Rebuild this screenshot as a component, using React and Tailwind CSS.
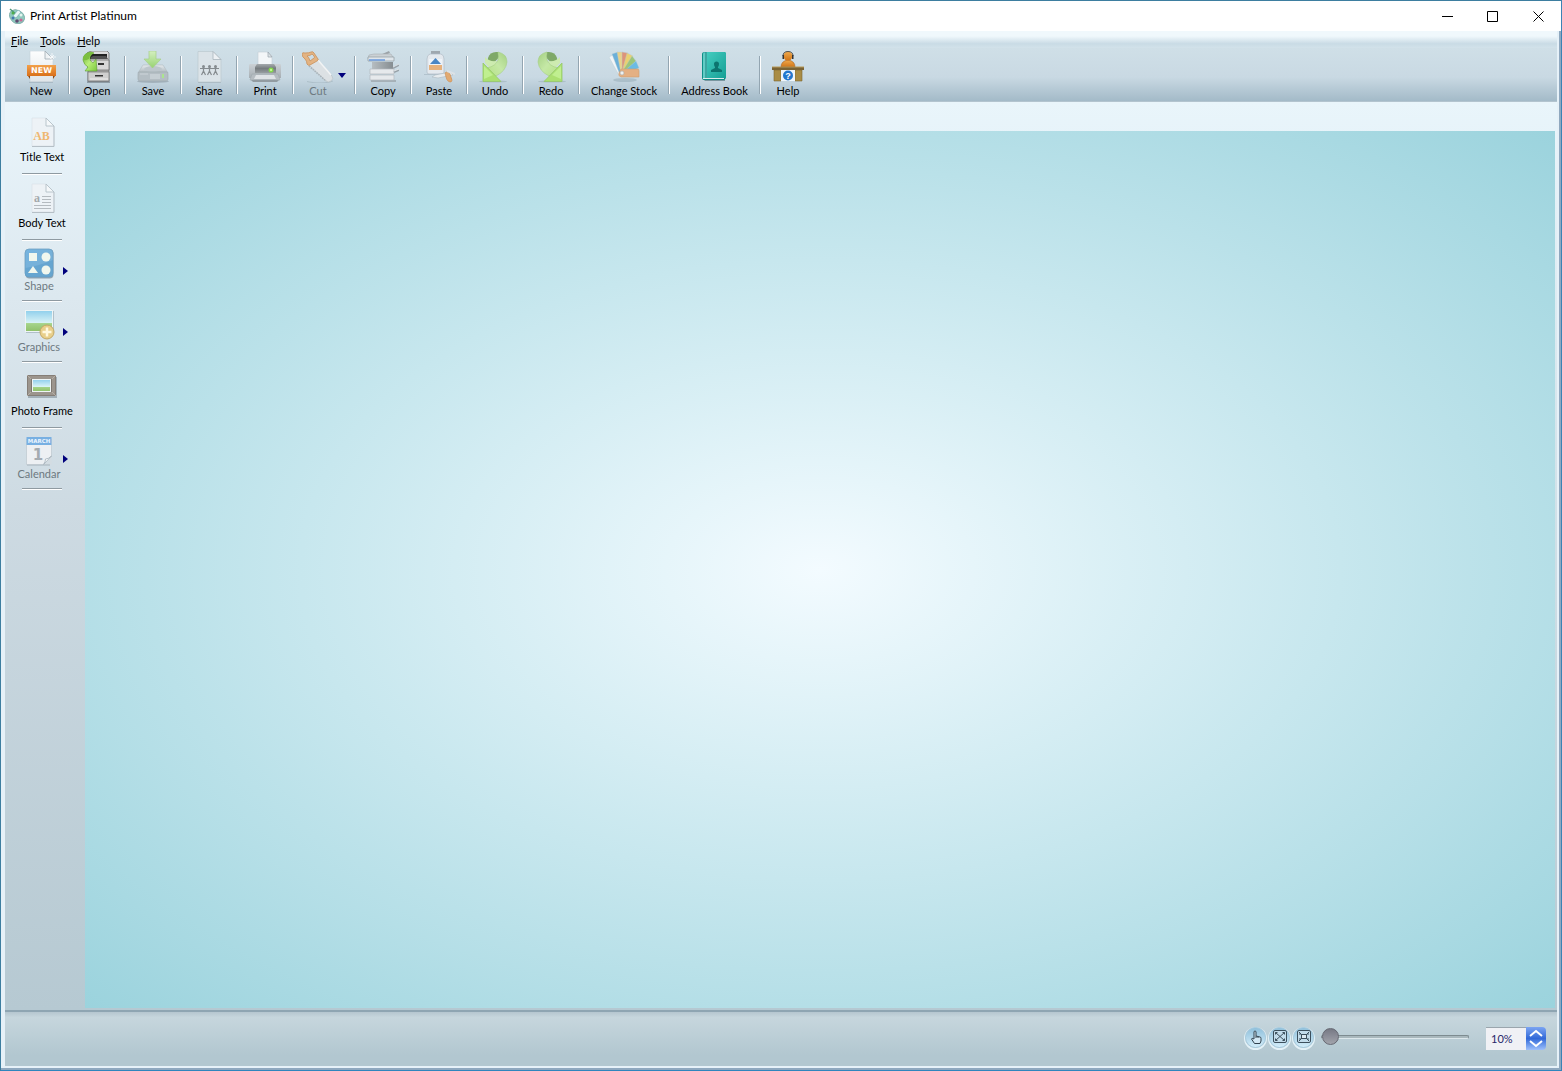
import React from 'react';

const NewIcon = () => (
  <svg width="32" height="32" viewBox="0 0 32 32">
    <defs>
      <linearGradient id="newPage" x1="0" y1="0" x2="0" y2="1">
        <stop offset="0" stopColor="#fdfefe" />
        <stop offset="1" stopColor="#dfe4e8" />
      </linearGradient>
      <linearGradient id="newBand" x1="0" y1="0" x2="0" y2="1">
        <stop offset="0" stopColor="#f2a04a" />
        <stop offset="1" stopColor="#d9701a" />
      </linearGradient>
    </defs>
    <path d="M5 0h15l8 8v23H5z" fill="url(#newPage)" stroke="#c5d0d8" strokeWidth="0.6" />
    <path d="M20 0l8 8h-8z" fill="#eef2f4" stroke="#9fabb3" strokeWidth="0.8" />
    <path d="M4 30.8h24v1H4z" fill="#8fa2ae" opacity="0.6" />
    <path d="M3 25l2 3v-3zM30 25l-2 3v-3z" fill="#8f4a12" />
    <path d="M2 14h29v11H2z" fill="url(#newBand)" />
    <path d="M27 2v8M23 6h8M25 4l4 4M29 4l-4 4" stroke="#fff" strokeWidth="0.7" />
    <text x="16.5" y="22" textAnchor="middle" fontSize="8" fontWeight="700" fill="#fff" fontFamily="DejaVu Sans, sans-serif" textRendering="geometricPrecision">NEW</text>
  </svg>
);

const OpenIcon = () => (
  <svg width="32" height="32" viewBox="0 0 32 32">
    <defs>
      <linearGradient id="cabinet" x1="0" y1="0" x2="0" y2="1">
        <stop offset="0" stopColor="#e2e2e2" />
        <stop offset="1" stopColor="#8e8e8e" />
      </linearGradient>
      <linearGradient id="openArrow" x1="0" y1="0" x2="1" y2="1">
        <stop offset="0" stopColor="#6cae33" />
        <stop offset="0.5" stopColor="#b9ee79" />
        <stop offset="1" stopColor="#7bc83d" />
      </linearGradient>
    </defs>
    <path d="M6 30h23v2H6z" fill="#6d7880" opacity="0.6" />
    <path d="M6 2l4-2h16l2 2v28H7V5z" fill="url(#cabinet)" stroke="#6d6d6d" strokeWidth="0.8" />
    <path d="M9 3h17v5H9z" fill="#222" />
    <path d="M10 6l2-1h13l2 3H10z" fill="#515151" />
    <path d="M9 9h19v10H9z" fill="#d8d8d8" stroke="#666" strokeWidth="0.7" />
    <path d="M7 21h21v9H7z" fill="#cfcfcf" stroke="#777" strokeWidth="0.7" />
    <path d="M17 12h6v2h-6zM14 24h8v1.500h-8z" fill="#333" />
    <path d="M9 28h18" stroke="#efefef" />
    <path d="M10 1Q2 2 2 9q1 5 5 7l-3 4h12L15 8l-3 4Q8 10 9 6q1-3 4-4z" fill="url(#openArrow)" stroke="#5b9d2c" strokeWidth="0.6" />
    <path d="M10 1Q2 2 2 9q2 1 6-1 0-4 5-6z" fill="#7cbf3f" />
  </svg>
);

const SaveIcon = () => (
  <svg width="32" height="32" viewBox="0 0 32 32" opacity="0.8">
    <defs>
      <linearGradient id="drive" x1="0" y1="0" x2="0" y2="1">
        <stop offset="0" stopColor="#eceff1" />
        <stop offset="1" stopColor="#a4acb1" />
      </linearGradient>
      <linearGradient id="saveArrow" x1="0" y1="0" x2="0" y2="1">
        <stop offset="0" stopColor="#d6f4b8" />
        <stop offset="1" stopColor="#8cd255" />
      </linearGradient>
    </defs>
    <ellipse cx="16" cy="30.5" rx="16" ry="1.5" fill="#84919a" opacity="0.6" />
    <path d="M6 14h20l5 8H1z" fill="url(#drive)" stroke="#aab2b7" strokeWidth="0.6" />
    <ellipse cx="16" cy="18" rx="9" ry="3" fill="#bac2c7" />
    <path d="M2 21h28q1 0 1 2v5q0 2-2 2H3q-2 0-2-2v-5q0-2 1-2z" fill="#b0b8bd" stroke="#949da3" strokeWidth="0.6" />
    <path d="M14 23v5M16 23v5M18 23v5M20 23v5M22 23v5" stroke="#dce1e4" />
    <path d="M26 23v4" stroke="#a4e878" strokeWidth="2" />
    <path d="M3 23h8" stroke="#cdd3d7" />
    <path d="M12 0h7v8h5l-8.500 9L7 8h5z" fill="url(#saveArrow)" stroke="#9dcc74" strokeWidth="0.7" />
  </svg>
);

const ShareIcon = () => (
  <svg width="32" height="32" viewBox="0 0 32 32">
    <path d="M5 31h23v1H5z" fill="#93a3ad" opacity="0.6" />
    <path d="M5 .5h15l8 8V31H5z" fill="#dbe3e8" stroke="#bcc8cf" strokeWidth="0.7" />
    <path d="M20 .5v8h8z" fill="#edf1f4" stroke="#a9b5bd" strokeWidth="0.8" />
    <g stroke="#858b8f" strokeWidth="1.2" fill="none">
      <path d="M7 17.500h19M10.500 16v4l-2 4M10.500 20l2 4M16.500 16v4l-2 4M16.500 20l2 4M22.500 16v4l-2 4M22.500 20l2 4" />
    </g>
    <g fill="#858b8f">
      <circle cx="10.500" cy="15.500" r="1.500" />
      <circle cx="16.500" cy="15.500" r="1.500" />
      <circle cx="22.500" cy="15.500" r="1.500" />
    </g>
  </svg>
);

const PrintIcon = () => (
  <svg width="32" height="32" viewBox="0 0 32 32">
    <defs>
      <linearGradient id="printer" x1="0" y1="0" x2="0" y2="1">
        <stop offset="0" stopColor="#cbd1d5" />
        <stop offset="1" stopColor="#a6aeb3" />
      </linearGradient>
      <linearGradient id="printerTop" x1="0" y1="0" x2="0" y2="1">
        <stop offset="0" stopColor="#a5aaad" />
        <stop offset="0.5" stopColor="#767c7f" />
        <stop offset="1" stopColor="#979da0" />
      </linearGradient>
    </defs>
    <path d="M9 1h10l4 4v9H9z" fill="#f3f6f8" stroke="#c4cdd3" strokeWidth="0.6" />
    <path d="M19 1v5h4z" fill="#dde3e6" stroke="#98a4ac" strokeWidth="0.7" />
    <path d="M1 13h30q1 0 1 2v12H0V15q0-2 1-2z" fill="url(#printer)" />
    <path d="M8 13h17l2 3v6H6v-6z" fill="url(#printerTop)" />
    <circle cx="22" cy="19" r="2.500" fill="#84d84d" />
    <circle cx="22" cy="19" r="1" fill="#d7ffa8" />
    <path d="M3 23h26l2 6H1z" fill="#b6bdc2" stroke="#9ea7ad" strokeWidth="0.6" />
    <path d="M7 24h18l2 4H5z" fill="#dfe3e6" />
    <path d="M2 29h28l-2 2H4z" fill="#929ba1" />
  </svg>
);

const CutIcon = () => (
  <svg width="32" height="32" viewBox="0 0 32 32">
    <path d="M5 30.500c8 2 20 2 26-.5" stroke="#9aabb5" opacity="0.5" fill="none" />
    <path d="M15 8L7 14l17 16q2 2 5 0 3-2 1-5z" fill="#dce1e4" stroke="#b9c1c6" strokeWidth="0.7" />
    <path d="M7 15l17 15" stroke="#aab3b9" strokeWidth="1.500" strokeDasharray="1.500 1" />
    <path d="M16 9l13 15" stroke="#f2f4f5" strokeWidth="1.500" />
    <path fillRule="evenodd" d="M0 3q0-2 3-1 4 0 6-1 2-1 3 1l4 6q1 1-1 2l-7 4q-2 1-3-1 0-3-2-5Q0 6 0 3zM5 5q2 1 3 5l4-3q1 0 0-2l-2-2q-2 2-5 2z" fill="#e3b382" stroke="#c9905a" strokeWidth="0.8" />
  </svg>
);

const CopyIcon = () => (
  <svg width="32" height="32" viewBox="0 0 32 32">
    <defs>
      <linearGradient id="copier" x1="0" y1="0" x2="1" y2="0">
        <stop offset="0" stopColor="#b6bdc1" />
        <stop offset="1" stopColor="#868d91" />
      </linearGradient>
    </defs>
    <path d="M4 29h25v2H4z" fill="#a5b0b7" />
    <path d="M13 4l9-4 1 2-8 3z" fill="#9ca3a8" />
    <path d="M2 4l5-1h17l3 5H1z" fill="#cbd1d5" stroke="#a7afb4" strokeWidth="0.6" />
    <path d="M1 6h26v4H1z" fill="#dfe5ea" stroke="#919ba2" strokeWidth="0.7" />
    <path d="M2 9h16" stroke="#6898dd" strokeWidth="1.500" />
    <path d="M5 11h21v7H5z" fill="url(#copier)" />
    <path d="M3 18h24v5H3zM3 24h24v5H3z" fill="#e6e9ec" stroke="#b1b9be" strokeWidth="0.7" />
    <path d="M26 17l6-3M27 21l5-2" stroke="#98a2a9" strokeWidth="2" />
    <path d="M26 16l6-3M27 20l5-2" stroke="#dfe4e7" />
  </svg>
);

const PasteIcon = () => (
  <svg width="32" height="32" viewBox="0 0 32 32">
    <path d="M1 23h22v1H1z" fill="#9aacb8" opacity="0.5" />
    <path d="M8 0h9v3H8z" fill="#9fa8af" />
    <path d="M7 3h11q3 1 3 5v13q0 2-2 2H6q-2 0-2-2V8q0-4 3-5z" fill="#e4e9ee" stroke="#b0bcc6" strokeWidth="0.7" />
    <path d="M6 8h13v6H6z" fill="#eef3f8" />
    <path d="M12.500 7L18 13H7z" fill="#4a86c5" />
    <path d="M6 14h13v5H6z" fill="#e6b17c" />
    <path d="M12 24l15-3 3 3-15 3-6-1z" fill="#e6ebee" stroke="#aab7bf" strokeWidth="0.6" />
    <path d="M22 22q4-4 6 4 2 4 0 5-4 0-5-5z" fill="#e1aa72" stroke="#cb8c50" strokeWidth="0.6" />
    <path d="M24 20l8 3" stroke="#dce2e6" strokeWidth="2" />
  </svg>
);

const CurlArrow = ({ id }) => (
  <>
    <defs>
      <linearGradient id={id} x1="1" y1="0" x2="0" y2="1">
        <stop offset="0" stopColor="#a3cf82" />
        <stop offset="0.5" stopColor="#c5e8a6" />
        <stop offset="1" stopColor="#b5e286" />
      </linearGradient>
    </defs>
    <ellipse cx="14" cy="30.500" rx="14" ry="1" fill="#95aab3" opacity="0.5" />
    <path d="M9 7Q11 0 19 1l1 5q-3 5-8 6-4-1-3-5z" fill="#7fa968" />
    <path d="M6 6q4 5 12 4-1 5-6 8L6 12z" fill="#cdebb0" />
    <path d="M19 1q9 2 9 10-1 9-11 14l-9-8q9-2 11-8 1-4 0-8z" fill={`url(#${id})`} stroke="#a5cf83" strokeWidth="0.6" />
    <path d="M4 12l18 18.500H4z" fill="#abe071" stroke="#96c969" strokeWidth="0.8" />
    <path d="M5 15l9 9-9 4z" fill="#c0ef90" />
  </>
);

const UndoIcon = () => (
  <svg width="32" height="32" viewBox="0 0 32 32">
    <CurlArrow id="undoCurl" />
  </svg>
);

const RedoIcon = () => (
  <svg width="32" height="32" viewBox="0 0 32 32">
    <g transform="translate(31 0) scale(-1 1)">
      <CurlArrow id="redoCurl" />
    </g>
  </svg>
);

const StockIcon = () => (
  <svg width="32" height="32" viewBox="0 0 32 32">
    <ellipse cx="17" cy="29" rx="12" ry="2" fill="#8fa3af" opacity="0.45" />
    <g stroke="#b6cbd5" strokeWidth="0.4">
      <path d="M1 6l4-2 9 19-2 3z" fill="#f2f5f7" />
      <path d="M4 3l6-2 5 21-3 2z" fill="#6cb0d8" />
      <path d="M9 1h6l1 21-3 1z" fill="#e8d28a" />
      <path d="M14 1l6 1-4 20-2-1z" fill="#dd9479" />
      <path d="M19 2l6 3-9 17-2-1z" fill="#e9d171" />
      <path d="M24 5l4 5-12 13-2-2z" fill="#9cc57a" />
      <path d="M28 10l3 7-15 6-2-1z" fill="#6bbbe4" />
    </g>
    <path d="M13 18h17q1 0 1 2v6H13q-3-1-2-4z" fill="#e4b083" stroke="#cf9d70" strokeWidth="0.6" />
    <circle cx="14" cy="22" r="2" fill="#edf1f2" stroke="#aaa" strokeWidth="0.6" />
  </svg>
);

const AddressIcon = () => (
  <svg width="32" height="32" viewBox="0 0 32 32">
    <defs>
      <linearGradient id="book" x1="0" y1="0" x2="1" y2="1">
        <stop offset="0" stopColor="#45cdc0" />
        <stop offset="1" stopColor="#159f95" />
      </linearGradient>
    </defs>
    <path d="M5 28h22v2H7z" fill="#79969f" />
    <path d="M7 1h19q2 0 2 2v23q0 2-2 3H6q-2 0-2-2V3q0-2 3-2z" fill="#0d8f87" />
    <path d="M8 1h18q2 0 2 2v23q0 1-2 1H8z" fill="url(#book)" />
    <path d="M5 3q0-2 4-2v26H5z" fill="#62ccc5" />
    <path d="M8 1v26" stroke="#16807f" />
    <path d="M5 27.500h21" stroke="#d9eceb" />
    <path d="M16 13q0-2.500 2.500-2.500T21 13q0 2-1 3v1l4 2v2H13v-2l4-2v-1q-1-1-1-3z" fill="#0c746f" />
  </svg>
);

const HelpIcon = () => (
  <svg width="32" height="32" viewBox="0 0 32 32">
    <defs>
      <linearGradient id="helper" x1="0" y1="0" x2="0" y2="1">
        <stop offset="0" stopColor="#f0aa4c" />
        <stop offset="1" stopColor="#cf7418" />
      </linearGradient>
    </defs>
    <path d="M9 16q0-6 7-7 7 1 7 7z" fill="url(#helper)" stroke="#a65c14" strokeWidth="0.6" />
    <circle cx="16" cy="5" r="4.500" fill="url(#helper)" />
    <path d="M11 5q0-4.500 5-4.500T21 5" stroke="#444" strokeWidth="0.9" fill="none" />
    <path d="M10.500 4H12v4h-1.500zM20 4h1.500v4H20z" fill="#333" />
    <path d="M2 19h7v11H2zM23 19h7v11h-7z" fill="#a98c45" stroke="#7d6630" strokeWidth="0.6" />
    <path d="M0 16h32v3H0z" fill="#7a6334" />
    <path d="M0 16h32" stroke="#b89a59" />
    <path d="M9 19h14v11H9z" fill="#f0f6fb" />
    <circle cx="16" cy="24.500" r="5" fill="#2377cd" />
    <text x="16" y="28" textAnchor="middle" fontSize="9" fontWeight="700" fill="#fff" fontFamily="Liberation Sans, sans-serif">?</text>
  </svg>
);

const FadedPage = ({ children }) => (
  <svg width="32" height="32" viewBox="0 0 32 32">
    <path d="M6 1h14l8 8v20H6z" fill="#edf2f6" stroke="#dbe3e8" strokeWidth="0.7" />
    <path d="M28 9v20.500H6" fill="none" stroke="#b5bfc6" />
    <path d="M20 1v8h8z" fill="#f5f8fa" stroke="#b3bfc7" strokeWidth="0.9" />
    {children}
  </svg>
);

const TitleTextIcon = () => (
  <FadedPage>
    <text x="15.500" y="23" textAnchor="middle" fontSize="12" fontWeight="700" fill="#efb771" fontFamily="Liberation Serif, serif">AB</text>
  </FadedPage>
);

const BodyTextIcon = () => (
  <FadedPage>
    <text x="11" y="19" textAnchor="middle" fontSize="12" fontWeight="700" fill="#a3a8ac" fontFamily="Liberation Serif, serif">a</text>
    <path d="M16 13.500h9M16 16.500h9M16 19.500h9M8 22.500h17M8 25.500h17" stroke="#b4babf" />
  </FadedPage>
);

const ShapeIcon = () => (
  <svg width="32" height="32" viewBox="0 0 32 32">
    <defs>
      <linearGradient id="shapeTile" x1="0" y1="0" x2="1" y2="1">
        <stop offset="0" stopColor="#75b4e0" />
        <stop offset="1" stopColor="#78aed2" />
      </linearGradient>
    </defs>
    <rect x="2.500" y="1.500" width="28" height="29" rx="4" fill="#8fa3b2" />
    <rect x="2" y="1" width="28" height="28" rx="4" fill="url(#shapeTile)" stroke="#6d9fc2" strokeWidth="0.8" />
    <path d="M2.500 20Q15 18 30 12v13q0 4-4 4H6q-4 0-4-4z" fill="#5c9fcc" opacity="0.6" />
    <path d="M6 5h8v8H6z" fill="#f1f7ee" />
    <circle cx="23" cy="9" r="4.500" fill="#f1f7ee" />
    <path d="M10 18l5 7H5z" fill="#f1f7ee" />
    <circle cx="23" cy="22" r="4.500" fill="#f1f7ee" />
  </svg>
);

const Landscape = ({ id, x, y, w, h }) => (
  <>
    <defs>
      <linearGradient id={id} x1="0" y1="0" x2="0" y2="1">
        <stop offset="0" stopColor="#8fcfec" />
        <stop offset="0.600" stopColor="#daf3f6" />
        <stop offset="0.620" stopColor="#a5d48a" />
        <stop offset="1" stopColor="#8fc069" />
      </linearGradient>
    </defs>
    <rect x={x} y={y} width={w} height={h} fill={`url(#${id})`} stroke="#edf4f5" />
  </>
);

const GraphicsIcon = () => (
  <svg width="32" height="32" viewBox="0 0 32 32">
    <rect x="3" y="2" width="28" height="22" fill="#9fafb9" opacity="0.7" />
    <Landscape id="graphicsView" x={2.5} y={1.5} w={27} h={21} />
    <circle cx="24" cy="23" r="7" fill="#e8cf8a" stroke="#c3a867" />
    <path d="M24 18.500v9M19.500 23h9" stroke="#fff8de" strokeWidth="2.500" />
  </svg>
);

const FrameIcon = () => (
  <svg width="32" height="32" viewBox="0 0 32 32">
    <path d="M2 6h29v21H2z" fill="#a3b0b8" />
    <path d="M1.500 4.500h28v20h-28z" fill="#9c958d" stroke="#857e77" />
    <path d="M1 4l5 5M30 4l-5 5M1 25l5-5M30 25l-5-5" stroke="#b5aea6" />
    <path d="M5 8h21v13H5z" fill="#7d7770" />
    <Landscape id="frameView" x={6.5} y={8.5} w={18} h={12} />
  </svg>
);

const CalendarIcon = () => (
  <svg width="32" height="32" viewBox="0 0 32 32">
    <path d="M4 28h23v1.500H4z" fill="#a6b2ba" />
    <path d="M3.500 3h25v18l-8 7.500h-17z" fill="#edf0f3" stroke="#bdc7ce" strokeWidth="0.7" />
    <path d="M3.500 1h25v8h-25z" fill="#78b0e2" />
    <path d="M28.500 20q-3 3-6 3 0 3-2 5.500h8z" fill="#d3dce2" />
    <path d="M28.500 20q-3 3-6 3 0 3-2 5.500z" fill="#fbfcfd" stroke="#a5b1ba" strokeWidth="0.8" />
    <text x="16" y="7" textAnchor="middle" fontSize="5.500" fontWeight="700" fill="#eaf5ff" fontFamily="DejaVu Sans, sans-serif" textRendering="geometricPrecision">MARCH</text>
    <text x="15" y="24" textAnchor="middle" fontSize="15" fontWeight="700" fill="#a4abb1" fontFamily="DejaVu Sans, sans-serif">1</text>
  </svg>
);

const AppLogo = () => (
  <svg width="16" height="16" viewBox="0 0 16 16">
    <path d="M2 3q4-3 9 0 4 2 5 7-1 5-6 6-6 0-9-6-2-4 1-7z" fill="#8fc9be" stroke="#6f9b9a" strokeWidth="0.6" />
    <path d="M1 1l7 6" stroke="#50987c" strokeWidth="1.500" />
    <path d="M4 8l5-6 3 2-5 6z" fill="#eaf7f8" stroke="#5fa1a5" strokeWidth="0.5" />
    <circle cx="4" cy="5" r="1.500" fill="#4fae4c" />
    <circle cx="4" cy="10" r="1.500" fill="#4478b0" />
    <circle cx="8" cy="13" r="1.800" fill="#5f4b70" />
    <circle cx="12" cy="12" r="1.600" fill="#c86795" />
    <circle cx="12" cy="7" r="1.500" fill="#e3f4ee" />
  </svg>
);

const HandIcon = () => (
  <svg width="14" height="14" viewBox="0 0 14 14" fill="#d3e8f4" stroke="#32434f" strokeWidth="1">
    <path d="M5 8V2q0-1 1-1t1 1v4l4 1q1 0 1 1.500V11l-1 2.500H5.500L2.500 9q0-1.500 2.500 0zM9 6.500V8M7 6v2" />
  </svg>
);

const FitPageIcon = () => (
  <svg width="16" height="16" viewBox="0 0 16 16" fill="none" stroke="#3d505d">
    <rect x="1.500" y="1.500" width="13" height="12" rx="1.500" fill="#c2dceb" />
    <path d="M3.500 3.500l9 8M12.500 3.500l-9 8" />
    <path d="M3.500 5.500v-2h2M10.500 3.500h2v2M3.500 9.500v2h2M10.500 11.500h2v-2" />
  </svg>
);

const FitObjectIcon = () => (
  <svg width="16" height="16" viewBox="0 0 16 16" fill="none" stroke="#3d505d">
    <rect x="1.500" y="1.500" width="13" height="12" rx="1.500" fill="#c2dceb" />
    <rect x="5.500" y="5.500" width="5" height="4" fill="#dceaf2" />
    <path d="M3 3l2.500 2.500M13 3l-2.500 2.500M3 12l2.500-2.500M13 12l-2.500-2.500M4 4v2M12 4v2M4 9v2M12 9v2" />
  </svg>
);

const tools = [
  { label: 'New', icon: NewIcon, width: 'w-[54px]' },
  { label: 'Open', icon: OpenIcon, width: 'w-[54px]' },
  { label: 'Save', icon: SaveIcon, width: 'w-[54px]' },
  { label: 'Share', icon: ShareIcon, width: 'w-[54px]' },
  { label: 'Print', icon: PrintIcon, width: 'w-[54px]' },
  { label: 'Cut', icon: CutIcon, width: 'w-[60px]', menu: true },
  { label: 'Copy', icon: CopyIcon, width: 'w-[54px]' },
  { label: 'Paste', icon: PasteIcon, width: 'w-[54px]' },
  { label: 'Undo', icon: UndoIcon, width: 'w-[54px]' },
  { label: 'Redo', icon: RedoIcon, width: 'w-[54px]' },
  { label: 'Change Stock', icon: StockIcon, width: 'w-[88px]' },
  { label: 'Address Book', icon: AddressIcon, width: 'w-[89px]' },
  { label: 'Help', icon: HelpIcon, width: 'w-[54px]' }
];

const inserts = [
  { label: 'Title Text', icon: TitleTextIcon },
  { label: 'Body Text', icon: BodyTextIcon },
  { label: 'Shape', icon: ShapeIcon, menu: true },
  { label: 'Graphics', icon: GraphicsIcon, menu: true },
  { label: 'Photo Frame', icon: FrameIcon },
  { label: 'Calendar', icon: CalendarIcon, menu: true }
];

const TitleBar = () => (
  <header className="flex h-[30px] items-center bg-white pl-2">
    <AppLogo />
    <h1 className="ml-[5px] flex-1 text-[12px] leading-4">Print Artist Platinum</h1>
    <button aria-label="Minimize" className="flex h-full w-[46px] items-center justify-center">
      <svg width="11" height="11" stroke="#000"><path d="M0 5.500h11" /></svg>
    </button>
    <button aria-label="Maximize" className="flex h-full w-[45px] items-center justify-center">
      <svg width="11" height="11" stroke="#000" fill="none"><path d="M.5.500h10v10H.5z" /></svg>
    </button>
    <button aria-label="Close" className="flex h-full w-[46px] items-center justify-center">
      <svg width="11" height="11" stroke="#000"><path d="M.5.500l10 10M10.500.500l-10 10" /></svg>
    </button>
  </header>
);

const MenuBar = () => (
  <nav className="flex h-[17px] items-end gap-3 bg-linear-to-b from-[#f0f8fc] from-30% via-[#c9dbe5] via-75% to-[#d2e2ea] pl-1.5 text-[11px] leading-[14px]">
    {['File', 'Tools', 'Help'].map((item) => (
      <button key={item}>
        <span className="underline">{item[0]}</span>{item.slice(1)}
      </button>
    ))}
  </nav>
);

const Toolbar = () => (
  <div className="flex h-[54px] items-start border-b border-[#b3c4cf] bg-linear-to-b from-[#cfdfe7] via-[#c9d9e3] via-55% to-[#a3bac8] pl-[9px] text-[11px] leading-4">
    {tools.map(({ label, icon: Icon, width, menu }, idx) => (
      <React.Fragment key={label}>
        {idx > 0 && <span className="mt-2 h-[38px] w-0.5 border-r border-l border-r-white border-l-[#93a5b1]" />}
        <button className={`flex items-center justify-center pt-[3px] ${width}`}>
          <span className={`flex flex-col items-center whitespace-nowrap ${menu ? 'text-[#6d7980]' : 'text-black'}`}>
            <Icon />
            {label}
          </span>
          {menu && <svg width="8" height="5" className="ml-1 shrink-0"><path d="M0 0h8L4 5z" fill="#00007c" /></svg>}
        </button>
      </React.Fragment>
    ))}
  </div>
);

const Sidebar = () => (
  <aside className="w-20 shrink-0 bg-linear-to-b from-[#eaf5fb] via-[#cddae2] via-45% to-[#b6c9d2] pt-[7px] text-[11px] leading-4">
    {inserts.map(({ label, icon: Icon, menu }) => (
      <div key={label} className="flex w-[74px] flex-col items-center">
        <button className={`flex items-center ${menu ? 'h-[59px] w-full pl-2.5' : 'h-16 justify-center'}`}>
          <span className={`flex flex-col items-center whitespace-nowrap ${menu ? 'w-12 text-[#6d7980]' : 'text-black'}`}>
            <Icon />
            <span className={menu ? '-mt-0.5' : ''}>{label}</span>
          </span>
          {menu && <svg width="5" height="8" className="shrink-0"><path d="M0 0v8l5-4z" fill="#00007c" /></svg>}
        </button>
        <span className="h-0.5 w-10 border-t border-b border-t-[#8f9aa1] border-b-white" />
      </div>
    ))}
  </aside>
);

const RoundButton = ({ label, children }) => (
  <button aria-label={label} className="flex size-[21px] items-center justify-center rounded-full border border-[#a7cbdf] bg-linear-to-b from-[#8fc0dc] to-[#d3edf9] shadow-[0_1px_0_1px_#e3f1f7]">
    {children}
  </button>
);

const StatusBar = () => (
  <footer className="flex h-14 items-center justify-end border-t-2 border-[#8ea5b2] bg-linear-to-b from-[#b5c6cf] via-[#c6d6dd] via-10% to-[#b2c7d0] to-80% pr-[11px] pb-1">
    <div className="flex gap-[3px]">
      <RoundButton label="Pan"><HandIcon /></RoundButton>
      <RoundButton label="Fit page"><FitPageIcon /></RoundButton>
      <RoundButton label="Fit object"><FitObjectIcon /></RoundButton>
    </div>
    <input
      type="range"
      aria-label="Zoom"
      min="10"
      max="400"
      defaultValue="10"
      className="ml-[7px] h-[18px] w-[148px] appearance-none bg-transparent [&::-webkit-slider-runnable-track]:h-1 [&::-webkit-slider-runnable-track]:rounded-full [&::-webkit-slider-runnable-track]:border [&::-webkit-slider-runnable-track]:border-[#7d8b90] [&::-webkit-slider-runnable-track]:border-b-[#dde8ec] [&::-webkit-slider-runnable-track]:bg-[#a9b8bd] [&::-webkit-slider-thumb]:-mt-2 [&::-webkit-slider-thumb]:size-[17px] [&::-webkit-slider-thumb]:appearance-none [&::-webkit-slider-thumb]:rounded-full [&::-webkit-slider-thumb]:border [&::-webkit-slider-thumb]:border-[#666872] [&::-webkit-slider-thumb]:bg-linear-to-b [&::-webkit-slider-thumb]:from-[#777985] [&::-webkit-slider-thumb]:to-[#a2a4ac]"
    />
    <div className="ml-[17px] flex h-6 pt-0.5">
      <input
        aria-label="Zoom percent"
        defaultValue="10%"
        className="h-[23px] w-10 border-t border-[#9aa5ad] bg-[#f0f1f5] pb-0.5 pl-[5px] text-[11px] text-[#27276b]"
      />
      <div className="flex h-[23px] w-5 flex-col rounded-r bg-linear-to-b from-[#7ba4f2] via-[#3269d8] via-50% to-[#9ec0fb]">
        <button aria-label="Zoom in" className="flex flex-1 items-center justify-center">
          <svg width="14" height="8" fill="none" stroke="#fff" strokeWidth="2"><path d="M1 7l6-5 6 5" /></svg>
        </button>
        <button aria-label="Zoom out" className="flex flex-1 items-center justify-center">
          <svg width="14" height="8" fill="none" stroke="#fff" strokeWidth="2"><path d="M1 1l6 5 6-5" /></svg>
        </button>
      </div>
    </div>
  </footer>
);

export default function App() {
  return (
    <div className="flex min-h-screen flex-col border border-t-[#3d7ea0] border-r-[#3a83b5] border-b-[#2f85bd] border-l-[#3d7ea0] font-[Lato,'Open_Sans',sans-serif] text-black">
      <TitleBar />
      <div className="flex flex-1 flex-col border-r-2 border-b-2 border-[#8fa8bf] bg-[#e6f1f8] pr-0.5 pb-0.5 pl-1">
        <MenuBar />
        <Toolbar />
        <div className="flex flex-1">
          <Sidebar />
          <main className="flex flex-1 bg-linear-to-b from-[#e9f5fb] to-[#b6c9d2] pt-[29px] pr-0.5 pb-0.5">
            <section
              aria-label="Canvas"
              className="flex-1 bg-[radial-gradient(ellipse_farthest-corner_at_center,#f3fbff_0%,#9bd3dd_100%)]"
            />
          </main>
        </div>
        <StatusBar />
      </div>
    </div>
  );
}
